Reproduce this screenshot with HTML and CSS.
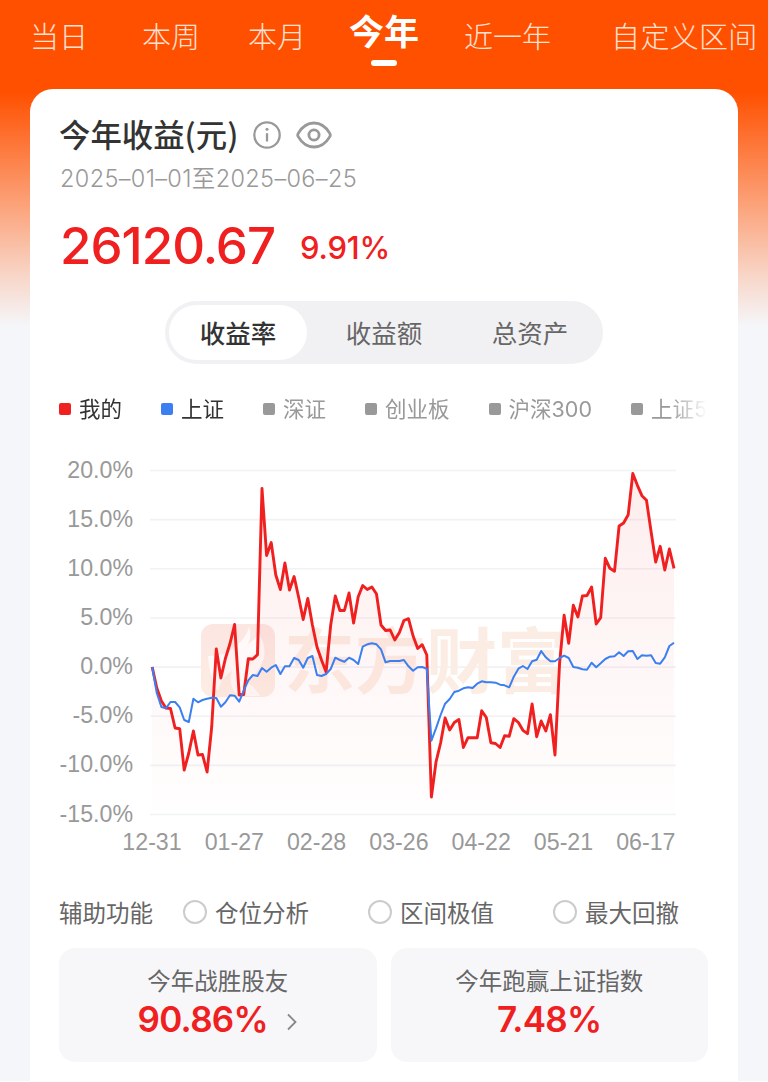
FILE: index.html
```
<!DOCTYPE html>
<html lang="zh-CN">
<head>
    <meta charset="UTF-8">
    <meta name="viewport" content="width=device-width, initial-scale=1.0">
    <title>今年收益</title>
    <link rel="stylesheet" href="styles.css">
</head>
<body>
    <div class="page">
        <nav class="tabs">
            <a class="tab">当日</a>
            <a class="tab">本周</a>
            <a class="tab">本月</a>
            <a class="tab active">今年</a>
            <a class="tab">近一年</a>
            <a class="tab">自定义区间</a>
        </nav>

        <main class="card">
            <div class="title">
                <h1>今年收益(元)</h1>
                <svg class="info" viewBox="0 0 28 28" width="28" height="28">
                    <circle cx="14" cy="14" r="12.7"/>
                    <path d="M14 12.2V20.5"/>
                    <circle class="dot" cx="14" cy="8.2" r="1.5"/>
                </svg>
                <svg class="eye" viewBox="0 0 36 28" width="36" height="28">
                    <path d="M2.2 12.4C5.6 6.5 11.5 2 18 2S30.4 6.5 33.8 12.4Q34.8 14 33.8 15.6C30.4 21.5 24.5 26 18 26S5.6 21.5 2.2 15.6Q1.2 14 2.2 12.4Z"/>
                    <circle cx="18" cy="14" r="5.1"/>
                </svg>
            </div>
            <p class="range">2025–01–01至2025–06–25</p>
            <div class="profit">
                <span class="amount">26120.67</span>
                <span class="rate">9.91%</span>
            </div>

            <div class="switch">
                <span class="on">收益率</span>
                <span>收益额</span>
                <span>总资产</span>
            </div>

            <div class="legend">
                <span class="item mine">我的</span>
                <span class="item sh">上证</span>
                <span class="item">深证</span>
                <span class="item">创业板</span>
                <span class="item">沪深300</span>
                <span class="item">上证5</span>
            </div>

            <svg class="chart" viewBox="30 450 708 410" width="708" height="410">
                <defs>
                    <linearGradient id="fill" gradientUnits="userSpaceOnUse" x1="0" y1="470" x2="0" y2="814">
                        <stop offset="0" stop-color="#f02020" stop-opacity="0.08"/>
                        <stop offset="1" stop-color="#f02020" stop-opacity="0.005"/>
                    </linearGradient>
                    <linearGradient id="logo" x1="0" y1="0" x2="0" y2="1">
                        <stop offset="0" stop-color="#fce6e2"/>
                        <stop offset="1" stop-color="#fcede4"/>
                    </linearGradient>
                </defs>
                <g id="grid"></g>
                <!-- watermark -->
                <rect x="201" y="624" width="74" height="73" rx="12" fill="url(#logo)"/>
                <path class="flame" d="M208 656Q225 657 236 646Q247 637 249 627Q252 636 248 644Q257 639 258 632Q270 651 260 667Q254 677 243 681Q255 686 260 696H239Q227 687 232 671Q222 676 218 691Q210 680 208 656Z"/>
                <text class="mark" x="284" y="687">东方财富</text>
                <path id="area" fill="url(#fill)"/>
                <polyline id="mine" class="line-mine"/>
                <polyline id="sh" class="line-sh"/>
                <g id="days"></g>
            </svg>

            <div class="tools">
                <span class="label">辅助功能</span>
                <span class="radio">仓位分析</span>
                <span class="radio">区间极值</span>
                <span class="radio">最大回撤</span>
            </div>

            <div class="stats">
                <div class="stat">
                    <p>今年战胜股友</p>
                    <div class="value">
                        <b>90.86%</b>
                        <svg viewBox="0 0 12 18" width="12" height="18"><path d="M2 1.5L9.5 9L2 16.5"/></svg>
                    </div>
                </div>
                <div class="stat">
                    <p>今年跑赢上证指数</p>
                    <div class="value"><b>7.48%</b></div>
                </div>
            </div>
        </main>
    </div>
    <script src="chart.js"></script>
</body>
</html>
```

FILE: styles.css
```
*, *::before, *::after {
    margin: 0;
    padding: 0;
    box-sizing: border-box;
}
body {
    font-family: "Noto Sans CJK SC", sans-serif;
    background-color: white;
    color: #333;
}
.page {
    height: 1081px;
    padding: 0 30px;
    background: linear-gradient(#ff5000 92px, #fc9d72 198px, #f8d5c7 275px, #f5f6f9 326px);
    overflow: hidden;
}

/* top tabs */
.tabs {
    display: flex;
    height: 89px;
    white-space: nowrap;
    color: #ffe2d4;
    font-size: 29px;
    font-weight: 300;
    line-height: 42px;
    padding-top: 14px;
}
.tab {
    margin-right: 54px;
}
.tab:nth-child(2) { margin-right: 48px; }
.tab:nth-child(3) { margin-right: 43px; }
.tab:nth-child(5) { margin-right: 60px; }
.tab:nth-child(6) {
    margin-right: 0;
    letter-spacing: 0.3px;
}
.tab.active {
    display: flex;
    flex-direction: column;
    align-items: center;
    color: white;
    font-size: 35px;
    font-weight: 600;
    margin-top: -5px;
    margin-right: 45px;
}
.tab.active::after {
    content: "";
    width: 26px;
    height: 6px;
    margin-top: 9px;
    border-radius: 3px;
    background-color: white;
}

.card {
    height: 992px;
    border-radius: 23px 23px 0 0;
    background-color: white;
}
.title {
    display: flex;
    align-items: center;
    height: 60px;
    padding: 32px 30px 0 29px;
}
.title h1 {
    margin-top: -2px;
    font-size: 31.4px;
    font-weight: 500;
    line-height: 40px;
}
.title svg {
    fill: none;
    stroke: #999;
    stroke-width: 2.3;
}
.title .info { margin-left: 15px; }
.title .eye {
    margin-left: 15px;
    stroke-width: 2.8;
}
.title .dot {
    fill: #999;
    stroke: none;
}
.range {
    height: 40px;
    margin-top: 10px;
    padding-left: 30px;
    color: #999;
    font-family: Inter, "Noto Sans CJK SC", sans-serif;
    font-size: 23.5px;
    font-weight: 350;
    letter-spacing: 0.35px;
    line-height: 40px;
}
.profit {
    display: flex;
    height: 74px;
    margin-top: 10px;
    padding-left: 30px;
    color: #f02020;
    font-family: Inter, sans-serif;
    font-weight: 500;
    line-height: 74px;
}
.amount {
    font-size: 51px;
    letter-spacing: -1px;
}
.rate {
    margin: 2px 0 0 25px;
    font-size: 31px;
    letter-spacing: -0.2px;
}

.switch {
    display: flex;
    width: 438px;
    height: 63px;
    margin: 18px auto 0;
    padding: 4px;
    border-radius: 32px;
    background-color: #f1f1f4;
    color: #666;
    font-size: 25.5px;
    line-height: 53px;
    text-align: center;
}
.switch span {
    flex: 1;
}
.switch span:nth-child(2) { flex: 0 0 154px; }
.switch .on {
    flex: 0 0 138px;
    border-radius: 28px;
    background-color: white;
    color: #333;
    font-weight: 500;
}

.legend {
    display: flex;
    gap: 39px;
    width: 650px;
    height: 32px;
    margin: 29px 0 0 29px;
    white-space: nowrap;
    color: #999;
    font-family: Inter, "Noto Sans CJK SC", sans-serif;
    font-size: 21.5px;
    line-height: 30px;
    -webkit-mask-image: linear-gradient(to right, black 610px, transparent 648px);
    mask-image: linear-gradient(to right, black 610px, transparent 648px);
}
.item {
    display: flex;
    align-items: center;
    gap: 8px;
}
.item::before {
    content: "";
    width: 12px;
    height: 12px;
    border-radius: 2px;
    background-color: #999;
}
.mine, .sh { color: #333; }
.mine::before { background-color: #f02020; }
.sh::before { background-color: #3b7ff0; }

/* chart */
.chart {
    display: block;
    margin-top: 25px;
    font-family: "Liberation Sans", Arial, sans-serif;
    font-size: 23.2px;
}
.chart text { fill: #999; }
.grid-line {
    stroke: #f2f2f5;
    stroke-width: 1.6;
}
.flame { fill: #fffaf9; }
.chart .mark {
    fill: #fcede4;
    font-family: "Noto Sans CJK SC", sans-serif;
    font-size: 71px;
    font-weight: 700;
}
.line-mine, .line-sh {
    fill: none;
    stroke-linejoin: round;
}
.line-mine {
    stroke: #f02020;
    stroke-width: 2.9;
}
.line-sh {
    stroke: #3b7ff0;
    stroke-width: 2;
}

.tools {
    display: flex;
    align-items: center;
    height: 34px;
    margin-top: 35px;
    padding-left: 29px;
    color: #666;
    font-size: 23.5px;
}
.label { width: 124px; }
.radio {
    display: flex;
    align-items: center;
    gap: 8px;
    width: 185px;
    white-space: nowrap;
}
.radio::before {
    content: "";
    width: 24px;
    height: 24px;
    border: 2px solid #ccc;
    border-radius: 50%;
}

.stats {
    display: grid;
    grid-template-columns: 1fr 1fr;
    gap: 14px;
    margin: 19px 30px 0 29px;
}
.stat {
    height: 114px;
    padding-top: 15px;
    border-radius: 16px;
    background-color: #f7f7fa;
    color: #666;
    font-size: 23.5px;
    line-height: 34px;
    text-align: center;
}
.value {
    display: flex;
    align-items: center;
    justify-content: center;
    gap: 18px;
    height: 44px;
    color: #f02020;
    font-family: Inter, sans-serif;
    font-size: 35px;
}
.value b {
    font-weight: 600;
    letter-spacing: -0.7px;
}
.value svg {
    fill: none;
    stroke: #888;
    stroke-width: 1.8;
    margin-top: 5px;
}
```

FILE: chart.js
```
// y position of every trading day, x goes in equal steps
var mine = [
    667, 688, 701, 708, 708.5, 728, 728.7, 770, 753, 731, 755, 754.5, 772, 727, 649, 678, 658.5, 643.5, 624.5, 695,
    694.5, 658.7, 659, 654.6, 488.5, 555.5, 542.5, 575, 589.5, 563, 590, 576.5, 597.5, 619.5, 598.5, 625, 647, 660, 672, 625,
    596, 610.5, 610.5, 593, 623, 596.7, 585.5, 589.5, 587, 594, 625, 630.5, 630, 640, 632.5, 620.5, 618.7, 636, 648.5, 644.7,
    655, 797, 762, 743, 718, 730, 722.5, 719.5, 747.5, 737.7, 737.7, 737.7, 710.7, 717.5, 742.7, 743.5, 747.5, 735.7, 736.3, 718.7,
    722.5, 730.3, 733.7, 704, 736.7, 721, 731, 714.7, 755, 663, 615.3, 643.3, 605.3, 617, 596, 595.5, 587, 624, 617.7, 558.3,
    568.3, 571.3, 526, 523, 514.7, 473.5, 485.3, 495.7, 500.3, 531.7, 562, 546.3, 570, 549, 568.3
];
var sh = [
    667, 693, 707, 708.3, 702, 702, 707.3, 720, 722, 698.7, 702.3, 700, 698.7, 697.7, 698, 706.7, 702.3, 695.3, 695.7, 701.7,
    690.7, 680.3, 675, 676, 668, 671.7, 667.7, 665, 674, 666.3, 666.3, 658, 660, 667.7, 658, 656, 675, 676, 674, 669,
    657.7, 660, 661.7, 657.7, 660, 664, 646.7, 644.3, 643.3, 644.3, 649.3, 662.3, 661, 661, 661, 660, 666.3, 670.7, 667.3, 667,
    668.7, 740.7, 728.3, 715, 703.7, 699, 692, 690.7, 688.3, 687.3, 688, 683.7, 681.3, 682.3, 682.3, 682.7, 684.7, 685.3, 687.3, 676.7,
    668.7, 666, 669, 661.3, 659.7, 651, 657.3, 661.3, 661.3, 658, 655.7, 658, 667, 667.7, 669.3, 669.7, 662.7, 667.3, 663.3, 659,
    656.7, 656.3, 652.3, 656, 651.3, 651, 659, 655.3, 655.7, 655.3, 663, 663.7, 657.3, 646, 642.7
];
var days = ["12-31", "01-27", "02-28", "03-26", "04-22", "05-21", "06-17"];

function toPoints(list) {
    return list.map((y, i) => (152.2 + i * 4.577).toFixed(1) + "," + y).join(" ");
}

document.querySelector("#mine").setAttribute("points", toPoints(mine));
document.querySelector("#sh").setAttribute("points", toPoints(sh));
document.querySelector("#area").setAttribute("d", "M152,814 L" + toPoints(mine) + " L674,814 Z");

var grid = "";
for (var i = 0; i < 8; i++) {
    var y = 470.5 + i * 49.15;
    grid += `<line class="grid-line" x1="150" x2="676" y1="${y}" y2="${y}"/>`;
    grid += `<text x="133" y="${y + 7}" text-anchor="end">${(20 - i * 5).toFixed(1)}%</text>`;
}
document.querySelector("#grid").innerHTML = grid;

document.querySelector("#days").innerHTML = days.map((day, i) =>
    `<text x="${152 + i * 82.3}" y="850" text-anchor="middle">${day}</text>`
).join("");
```
